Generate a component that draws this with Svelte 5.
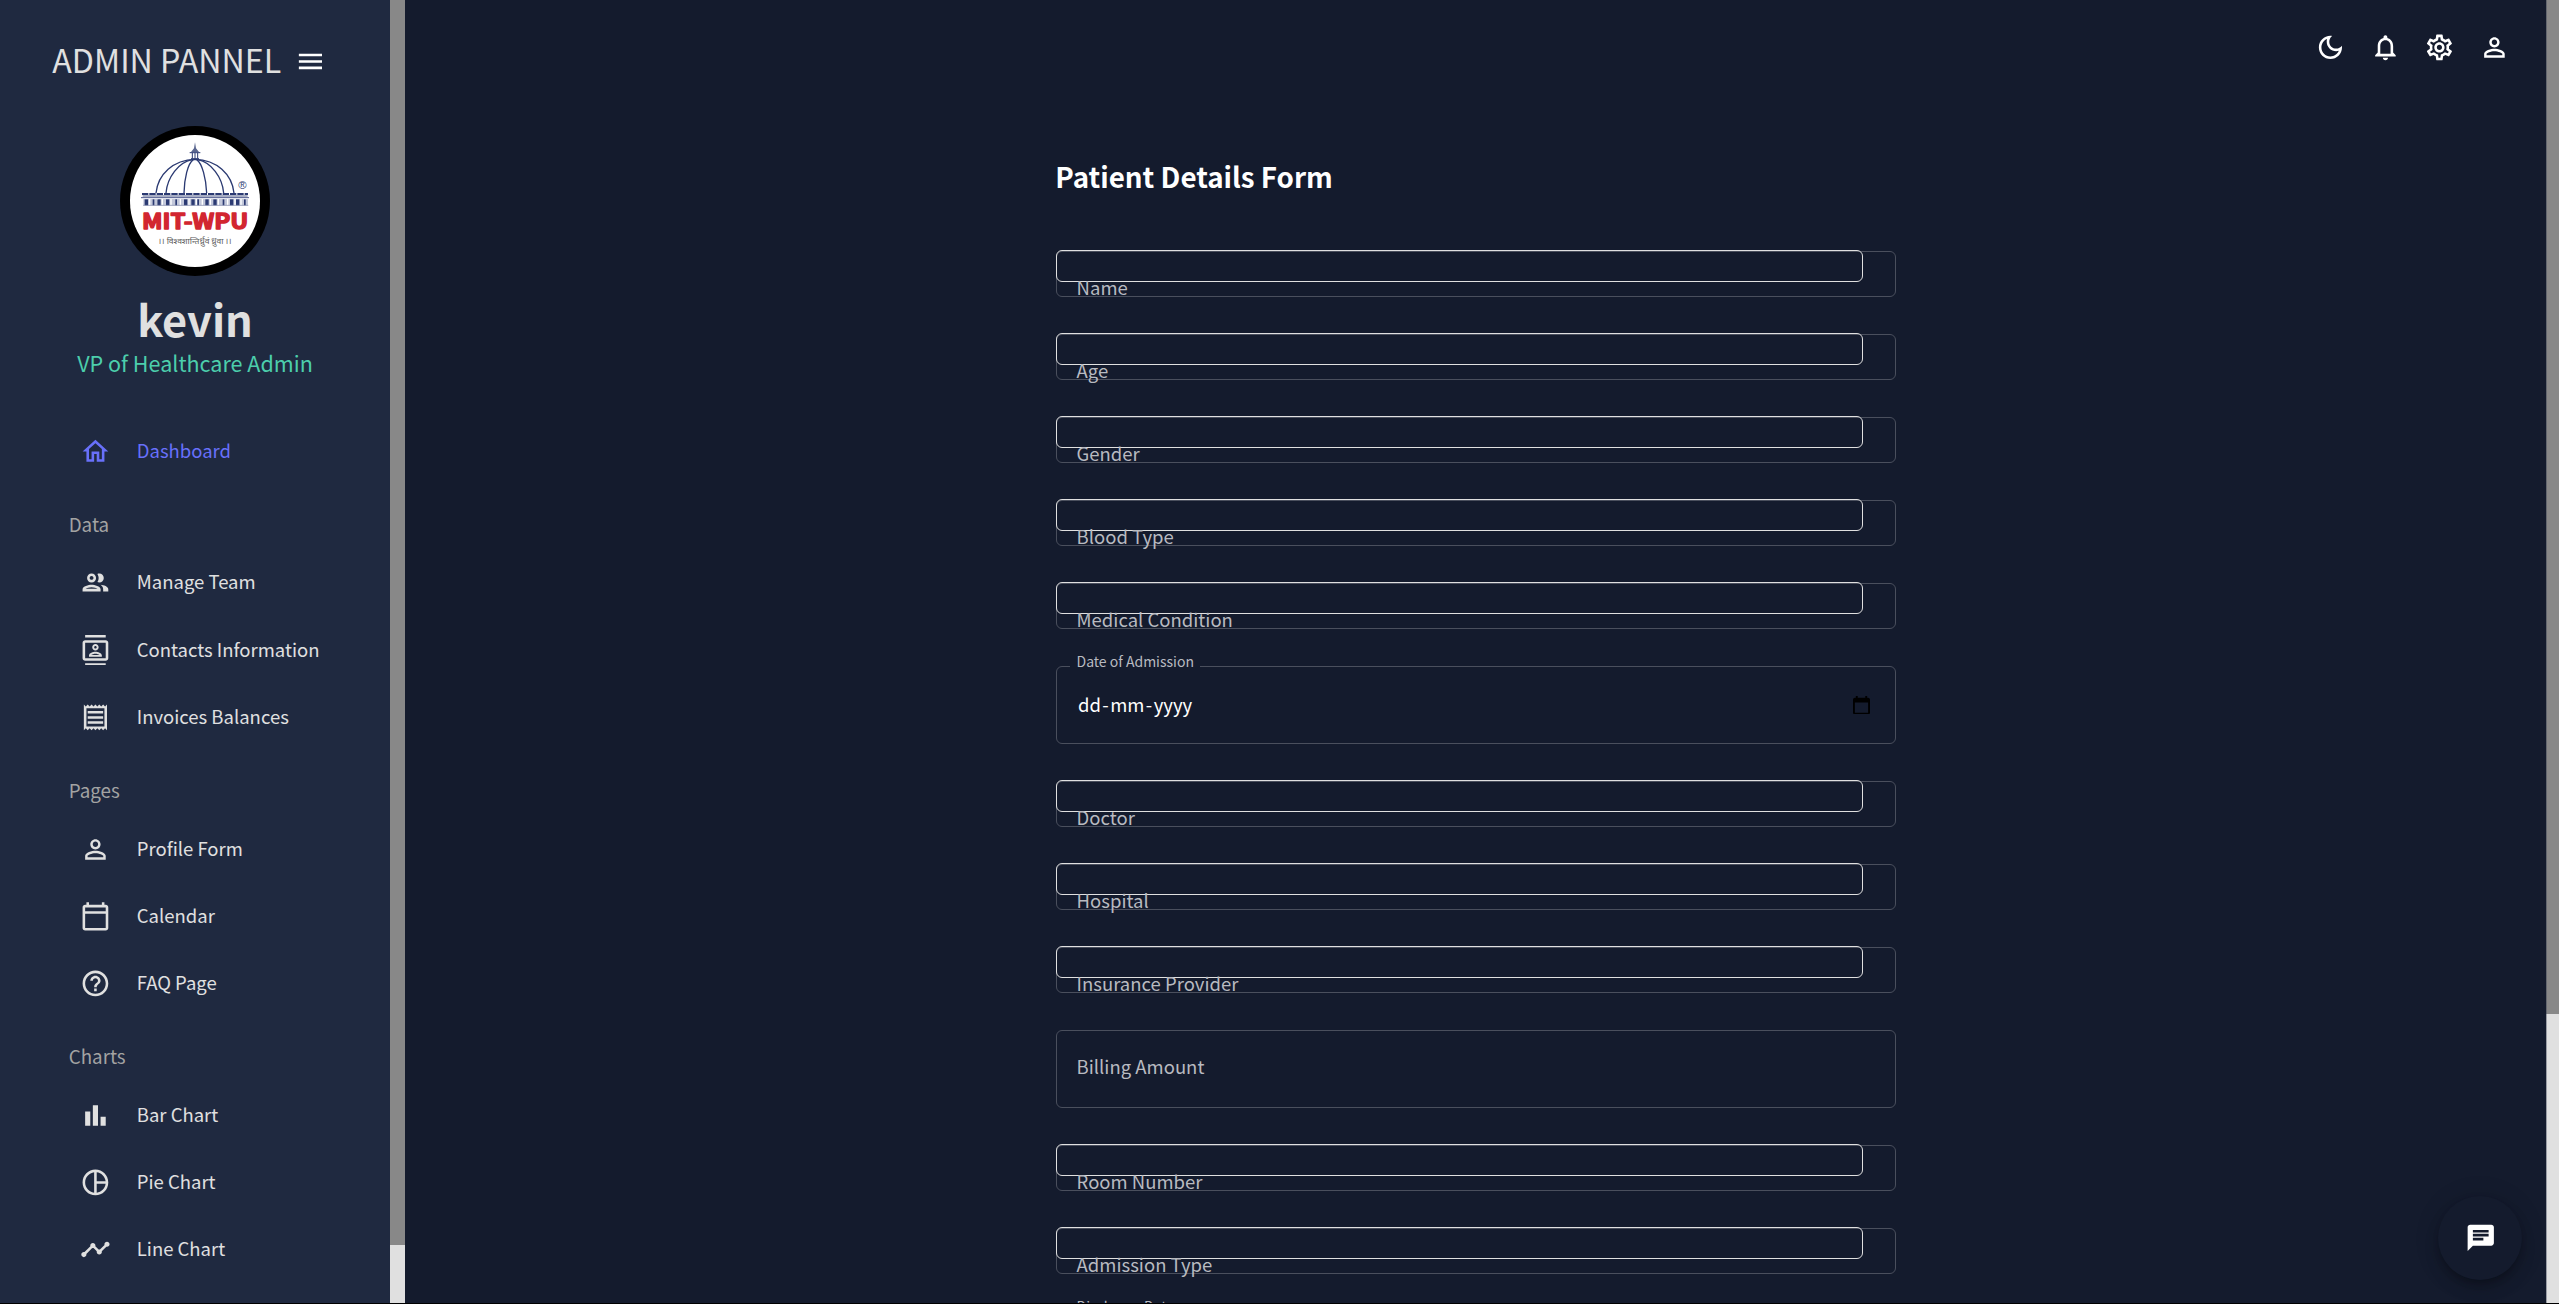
<script>
  const icons = {
    menu: 'M3 18h18v-2H3zm0-5h18v-2H3zm0-7v2h18V6z',
    home: 'm12 5.69 5 4.5V18h-2v-6H9v6H7v-7.81zM12 3 2 12h3v8h6v-6h2v6h6v-8h3z',
    people: 'M9 13.75c-2.34 0-7 1.17-7 3.5V19h14v-1.75c0-2.33-4.66-3.5-7-3.5M4.34 17c.84-.58 2.87-1.25 4.66-1.25s3.82.67 4.66 1.25zM9 12c1.93 0 3.5-1.57 3.5-3.5S10.93 5 9 5 5.5 6.57 5.5 8.5 7.07 12 9 12m0-5c.83 0 1.5.67 1.5 1.5S9.83 10 9 10s-1.5-.67-1.5-1.5S8.17 7 9 7m7.04 6.81c1.16.84 1.96 1.96 1.96 3.44V19h4v-1.75c0-2.02-3.5-3.17-5.96-3.44M15 12c1.93 0 3.5-1.57 3.5-3.5S16.93 5 15 5c-.54 0-1.04.13-1.5.35.63.89 1 1.98 1 3.15s-.37 2.26-1 3.15c.46.22.96.35 1.5.35',
    contacts: 'M20 4H4c-1.1 0-2 .9-2 2v12c0 1.1.9 2 2 2h16c1.1 0 2-.9 2-2V6c0-1.1-.9-2-2-2m0 14H4V6h16zM4 0h16v2H4zm0 22h16v2H4zm8-10c1.38 0 2.5-1.12 2.5-2.5S13.38 7 12 7 9.5 8.12 9.5 9.5 10.62 12 12 12m0-3.5c.55 0 1 .45 1 1s-.45 1-1 1-1-.45-1-1 .45-1 1-1m5 7.49C17 13.9 13.69 13 12 13s-5 .9-5 2.99V17h10zm-8.19-.49c.61-.52 2.03-1 3.19-1 1.17 0 2.59.48 3.2 1z',
    receipt: 'M19.5 3.5 18 2l-1.5 1.5L15 2l-1.5 1.5L12 2l-1.5 1.5L9 2 7.5 3.5 6 2 4.5 3.5 3 2v20l1.5-1.5L6 22l1.5-1.5L9 22l1.5-1.5L12 22l1.5-1.5L15 22l1.5-1.5L18 22l1.5-1.5L21 22V2zM19 19.09H5V4.91h14zM6 15h12v2H6zm0-4h12v2H6zm0-4h12v2H6z',
    person: 'M12 5.9c1.16 0 2.1.94 2.1 2.1s-.94 2.1-2.1 2.1S9.9 9.16 9.9 8s.94-2.1 2.1-2.1m0 9c2.97 0 6.1 1.46 6.1 2.1v1.1H5.9V17c0-.64 3.13-2.1 6.1-2.1M12 4C9.79 4 8 5.79 8 8s1.79 4 4 4 4-1.79 4-4-1.79-4-4-4m0 9c-2.67 0-8 1.34-8 4v3h16v-3c0-2.66-5.33-4-8-4',
    calendar: 'M20 3h-1V1h-2v2H7V1H5v2H4c-1.1 0-2 .9-2 2v16c0 1.1.9 2 2 2h16c1.1 0 2-.9 2-2V5c0-1.1-.9-2-2-2m0 18H4V10h16zm0-13H4V5h16z',
    help: 'M11 18h2v-2h-2zm1-16C6.48 2 2 6.48 2 12s4.48 10 10 10 10-4.48 10-10S17.52 2 12 2m0 18c-4.41 0-8-3.59-8-8s3.59-8 8-8 8 3.59 8 8-3.59 8-8 8m0-14c-2.21 0-4 1.79-4 4h2c0-1.1.9-2 2-2s2 .9 2 2c0 2-3 1.75-3 5h2c0-2.25 3-2.5 3-5 0-2.21-1.79-4-4-4',
    bar: 'M4 9h4v11H4zm12 4h4v7h-4zm-6-9h4v16h-4z',
    pie: 'M12 2C6.48 2 2 6.48 2 12s4.48 10 10 10 10-4.48 10-10S17.52 2 12 2m1 2.07c3.61.45 6.48 3.33 6.93 6.93H13zM4 12c0-4.06 3.07-7.44 7-7.93v15.87c-3.93-.5-7-3.88-7-7.94m9 7.93V13h6.93c-.45 3.61-3.32 6.48-6.93 6.93',
    line: 'M23 8c0 1.1-.9 2-2 2-.18 0-.35-.02-.51-.07l-3.56 3.55c.05.16.07.34.07.52 0 1.1-.9 2-2 2s-2-.9-2-2c0-.18.02-.36.07-.52l-2.55-2.55c-.16.05-.34.07-.52.07s-.36-.02-.52-.07l-4.55 4.56c.05.16.07.33.07.51 0 1.1-.9 2-2 2s-2-.9-2-2 .9-2 2-2c.18 0 .35.02.51.07l4.56-4.55C8.02 9.36 8 9.18 8 9c0-1.1.9-2 2-2s2 .9 2 2c0 .18-.02.36-.07.52l2.55 2.55c.16-.05.34-.07.52-.07s.36.02.52.07l3.55-3.56C19.02 8.35 19 8.18 19 8c0-1.1.9-2 2-2s2 .9 2 2',
    moon: 'M9.37 5.51c-.18.64-.27 1.31-.27 1.99 0 4.08 3.32 7.4 7.4 7.4.68 0 1.35-.09 1.99-.27C17.45 17.19 14.93 19 12 19c-3.86 0-7-3.14-7-7 0-2.93 1.81-5.45 4.37-6.49M12 3c-4.97 0-9 4.03-9 9s4.03 9 9 9 9-4.03 9-9c0-.46-.04-.92-.1-1.36-.98 1.37-2.58 2.26-4.4 2.26-2.98 0-5.4-2.42-5.4-5.4 0-1.81.89-3.42 2.26-4.4C12.92 3.04 12.46 3 12 3',
    bell: 'M12 22c1.1 0 2-.9 2-2h-4c0 1.1.89 2 2 2m6-6v-5c0-3.07-1.64-5.64-4.5-6.32V4c0-.83-.67-1.5-1.5-1.5s-1.5.67-1.5 1.5v.68C7.63 5.36 6 7.92 6 11v5l-2 2v1h16v-1zm-2 1H8v-6c0-2.48 1.51-4.5 4-4.5s4 2.02 4 4.5z',
    gear: 'M19.43 12.98c.04-.32.07-.64.07-.98s-.03-.66-.07-.98l2.11-1.65c.19-.15.24-.42.12-.64l-2-3.46c-.09-.16-.26-.25-.44-.25-.06 0-.12.01-.17.03l-2.49 1c-.52-.4-1.08-.73-1.69-.98l-.38-2.65C14.46 2.18 14.25 2 14 2h-4c-.25 0-.46.18-.49.42l-.38 2.65c-.61.25-1.17.59-1.69.98l-2.49-1c-.06-.02-.12-.03-.18-.03-.17 0-.34.09-.43.25l-2 3.46c-.13.22-.07.49.12.64l2.11 1.65c-.04.32-.07.65-.07.98s.03.66.07.98l-2.11 1.65c-.19.15-.24.42-.12.64l2 3.46c.09.16.26.25.44.25.06 0 .12-.01.17-.03l2.49-1c.52.4 1.08.73 1.69.98l.38 2.65c.03.24.24.42.49.42h4c.25 0 .46-.18.49-.42l.38-2.65c.61-.25 1.17-.59 1.69-.98l2.49 1c.06.02.12.03.18.03.17 0 .34-.09.43-.25l2-3.46c.12-.22.07-.49-.12-.64zm-1.98-1.71c.04.31.05.52.05.73s-.02.43-.05.73l-.14 1.13.89.7 1.08.84-.7 1.21-1.27-.51-1.04-.42-.9.68c-.43.32-.84.56-1.25.73l-1.06.43-.16 1.13-.2 1.35h-1.4l-.19-1.35-.16-1.13-1.06-.43c-.43-.18-.83-.41-1.23-.71l-.91-.7-1.06.43-1.27.51-.7-1.21 1.08-.84.89-.7-.14-1.13c-.03-.31-.05-.54-.05-.74s.02-.43.05-.73l.14-1.13-.89-.7-1.08-.84.7-1.21 1.27.51 1.04.42.9-.68c.43-.32.84-.56 1.25-.73l1.06-.43.16-1.13.2-1.35h1.39l.19 1.35.16 1.13 1.06.43c.43.18.83.41 1.23.71l.91.7 1.06-.43 1.27-.51.7 1.21-1.07.85-.89.7zM12 8c-2.21 0-4 1.79-4 4s1.79 4 4 4 4-1.79 4-4-1.79-4-4-4m0 6c-1.1 0-2-.9-2-2s.9-2 2-2 2 .9 2 2-.9 2-2 2',
    chat: 'M20 2H4c-1.1 0-1.99.9-1.99 2L2 22l4-4h14c1.1 0 2-.9 2-2V4c0-1.1-.9-2-2-2M6 9h12v2H6zm8 5H6v-2h8zm4-6H6V6h12z'
  };

  const menu = [
    { label: 'Dashboard', icon: 'home', active: true },
    { heading: 'Data' },
    { label: 'Manage Team', icon: 'people' },
    { label: 'Contacts Information', icon: 'contacts' },
    { label: 'Invoices Balances', icon: 'receipt' },
    { heading: 'Pages' },
    { label: 'Profile Form', icon: 'person' },
    { label: 'Calendar', icon: 'calendar' },
    { label: 'FAQ Page', icon: 'help' },
    { heading: 'Charts' },
    { label: 'Bar Chart', icon: 'bar' },
    { label: 'Pie Chart', icon: 'pie' },
    { label: 'Line Chart', icon: 'line' }
  ];

  const fields = [
    { label: 'Name' },
    { label: 'Age' },
    { label: 'Gender' },
    { label: 'Blood Type' },
    { label: 'Medical Condition' },
    { label: 'Date of Admission', kind: 'date' },
    { label: 'Doctor' },
    { label: 'Hospital' },
    { label: 'Insurance Provider' },
    { label: 'Billing Amount', kind: 'number' },
    { label: 'Room Number' },
    { label: 'Admission Type' },
    { label: 'Discharge Date', kind: 'date', clipped: true }
  ];

  const columns = [104, 128, 142, 168, 196, 222, 244, 262, 286, 310, 338, 360, 378, 402];
</script>

{#snippet icon(name)}
  <svg class="icon" viewBox="0 0 24 24" aria-hidden="true"><path d={icons[name]} /></svg>
{/snippet}

<div class="app">
  <aside class="sidebar">
    <div class="brand">
      <h1>ADMIN PANNEL</h1>
      {@render icon('menu')}
    </div>

    <svg class="avatar" viewBox="30 33 450 450" role="img" aria-label="MIT-WPU">
      <circle cx="255" cy="258" r="225" fill="#000" />
      <ellipse cx="255" cy="258" rx="195" ry="198" fill="#fff" />
      <g fill="none" stroke="#2b3a72" stroke-width="4">
        <path d="M138 234C144 178 190 134 255 133C320 134 366 178 372 234" />
        <path d="M168 234C172 186 206 142 246 134M341 234C337 186 303 142 264 134" />
        <path d="M222 234C223 190 233 146 250 134M290 234C288 190 277 146 260 134" />
      </g>
      <path d="M255 82l3 18 9 11h-24l9-11z" fill="#5a668f" />
      <path d="M239 113h32M243 131h24" stroke="#2b3a72" stroke-width="3" />
      <path d="M247 113v18M255 113v18M263 113v18" stroke="#2b3a72" stroke-width="3" />
      <path d="M96 237h318" stroke="#2b3a72" stroke-width="6" stroke-dasharray="19 3" />
      <path d="M98 243h315" stroke="#8b93b0" stroke-width="5" />
      <path d="M93 248h324" stroke="#4a568a" stroke-width="3" />
      <path d="M100 262h314" stroke="#c3c8da" stroke-width="20" />
      {#each columns as x, i}
        <rect {x} y="253" width={i % 3 === 1 ? 5 : 10} height="18" fill="#2b3a72" />
        <rect x={x + 13} y="252" width="4" height="19" fill="#fff" />
      {/each}
      <path d="M99 271h316" stroke="#8b93b0" stroke-width="2" />
      <text class="reg" x="397" y="222" text-anchor="middle">®</text>
      <text class="mark" x="96" y="341" textLength="319" lengthAdjust="spacingAndGlyphs">MIT-WPU</text>
      <text class="motto" x="145" y="386" textLength="220" lengthAdjust="spacingAndGlyphs">।। विश्वशान्तिर्ध्रुवं ध्रुवा ।।</text>
    </svg>

    <h2>kevin</h2>
    <p class="role">VP of Healthcare Admin</p>

    <nav>
      {#each menu as entry}
        {#if entry.heading}
          <h6>{entry.heading}</h6>
        {:else}
          <div class="item" class:active={entry.active}>
            {@render icon(entry.icon)}
            <span>{entry.label}</span>
          </div>
        {/if}
      {/each}
    </nav>
  </aside>
  <div class="scroll side"><div class="thumb"></div></div>

  <main>
    <header>
      {@render icon('moon')}
      {@render icon('bell')}
      {@render icon('gear')}
      {@render icon('person')}
    </header>
    <section class="form">
      <h3>Patient Details Form</h3>
      {#each fields as field}
        {#if field.kind}
          <div class="field tall {field.kind}">
            <div class="outline"></div>
            {#if field.kind === 'date' && !field.clipped}
              <div class="value">
                <span>dd</span><span>-</span><span>mm</span><span>-</span><span>yyyy</span>
                <svg class="picker" viewBox="3 2 18 20" preserveAspectRatio="none" aria-hidden="true">
                  <path d="M19 4h-1V2h-2v2H8V2H6v2H5c-1.1 0-2 .9-2 2v14c0 1.1.9 2 2 2h14c1.1 0 2-.9 2-2V6c0-1.1-.9-2-2-2m0 16H5V9h14z" />
                </svg>
              </div>
            {/if}
            <span class="label">{field.label}</span>
          </div>
        {:else}
          <div class="field">
            <div class="outline"></div>
            <div class="input"></div>
            <span class="label">{field.label}</span>
          </div>
        {/if}
      {/each}
    </section>
  </main>
  <div class="scroll page"><div class="thumb"></div></div>

  <div class="fab">{@render icon('chat')}</div>
</div>

<style>
  :global(body) {
    margin: 0;
    background: #000;
  }
  .app {
    position: relative;
    display: flex;
    width: 2559px;
    height: 1303px;
    overflow: hidden;
    background: #141b2d;
    color: #e0e0e0;
    font-family: 'Noto Sans CJK SC', 'Noto Sans', sans-serif;
    font-size: 18.5px;
  }
  h1, h2, h3, h6, p {
    margin: 0;
    font-weight: 400;
    white-space: nowrap;
  }
  .icon {
    display: block;
    flex: none;
    width: 30.86px;
    height: 30.86px;
    fill: currentColor;
  }

  .sidebar {
    flex: none;
    display: flex;
    flex-direction: column;
    width: 390px;
    height: 1303px;
    overflow: hidden;
    background: #1f2940;
  }
  .brand {
    flex: none;
    display: flex;
    align-items: center;
    gap: 13.6px;
    height: 46px;
    padding: 36px 0 0 52.3px;
  }
  .brand h1 {
    font-size: 32.2px;
    line-height: 46px;
  }
  .brand .icon {
    margin-top: 5px;
    color: #fff;
  }
  .avatar {
    flex: none;
    align-self: center;
    width: 150px;
    height: 150px;
    margin-top: 44px;
  }
  .reg {
    font: 34px 'Liberation Sans', sans-serif;
    fill: #2b3a72;
  }
  .mark {
    font: 700 62px 'Noto Sans CJK SC', sans-serif;
    fill: #d22630;
    stroke: #d22630;
    stroke-width: 4px;
    stroke-linejoin: round;
  }
  .motto {
    font: 25px 'Noto Sans CJK SC', 'Noto Sans', sans-serif;
    fill: #5c5c5c;
  }
  h2 {
    margin-top: 14px;
    text-align: center;
    font-size: 43.3px;
    font-weight: 700;
    line-height: 56px;
  }
  .role {
    margin-top: 0.5px;
    text-align: center;
    font-size: 21.55px;
    line-height: 32px;
    color: #4cceac;
  }
  nav {
    margin-top: 39px;
  }
  .item {
    display: flex;
    align-items: center;
    gap: 26px;
    height: 67.3px;
    padding-left: 79.9px;
    white-space: nowrap;
  }
  .item span {
    padding-bottom: 2.8px;
    line-height: 28px;
  }
  .item.active {
    color: #6870fa;
  }
  h6 {
    box-sizing: border-box;
    height: 64.3px;
    padding: 13px 0 0 68.7px;
    font-size: 18.8px;
    line-height: 51.3px;
    color: #a3a3a3;
  }

  .scroll {
    flex: none;
    background: #e0e0e0;
  }
  .scroll .thumb {
    background: #888;
  }
  .side {
    width: 15px;
  }
  .side .thumb {
    height: 1245px;
  }
  .page {
    box-sizing: border-box;
    width: 13px;
    box-shadow: inset 1px 0 0 #9a9da5;
  }
  .page .thumb {
    height: 1014px;
    box-shadow: inset 1px 0 0 #64676f;
  }

  main {
    flex: 1;
    min-width: 0;
    overflow: hidden;
  }
  header {
    display: flex;
    justify-content: flex-end;
    align-items: center;
    gap: 24px;
    height: 95px;
    padding-right: 35.8px;
    color: #fff;
  }
  .form {
    width: 840px;
    margin: 61px 0 0 651px;
  }
  h3 {
    margin: 0 0 54px -0.7px;
    font-size: 27.75px;
    font-weight: 700;
    line-height: 40px;
    color: #fff;
  }
  .field {
    display: grid;
    height: 47px;
    margin-bottom: 36px;
  }
  .field > * {
    grid-area: 1 / 1;
  }
  .outline {
    margin-top: 1px;
    border: 1px solid #4a4f5d;
    border-radius: 6px;
  }
  .input {
    box-sizing: border-box;
    width: 807px;
    height: 32px;
    border: 1px solid #e0e0e0;
    border-radius: 6px;
  }
  .label {
    justify-self: start;
    align-self: start;
    margin: 27px 0 0 20.6px;
    line-height: 20px;
    white-space: nowrap;
    color: #b8bac0;
  }
  .tall {
    height: 79px;
  }
  .date .label {
    margin: -11px 0 0 13.5px;
    padding: 0 6px 0 7px;
    font-size: 14px;
    line-height: 14px;
    background: #141b2d;
  }
  .value {
    display: flex;
    align-items: flex-start;
    gap: 1.4px;
    padding: 29px 26px 0 22px;
    line-height: 20px;
    color: #fff;
  }
  .picker {
    width: 17px;
    height: 18.5px;
    margin: 1.5px 0 0 auto;
    fill: #000;
  }

  .fab {
    position: absolute;
    right: 37px;
    bottom: 23px;
    display: flex;
    align-items: center;
    justify-content: center;
    width: 84px;
    height: 84px;
    border-radius: 50%;
    background: #141b2d;
    color: #fff;
    box-shadow:
      0 4.5px 7.5px -1.5px rgba(0, 0, 0, 0.2),
      0 9px 15px 0 rgba(0, 0, 0, 0.14),
      0 1.5px 27px 0 rgba(0, 0, 0, 0.12);
  }
  .fab .icon {
    width: 31.5px;
    height: 31.5px;
    margin-left: 1px;
  }
</style>
